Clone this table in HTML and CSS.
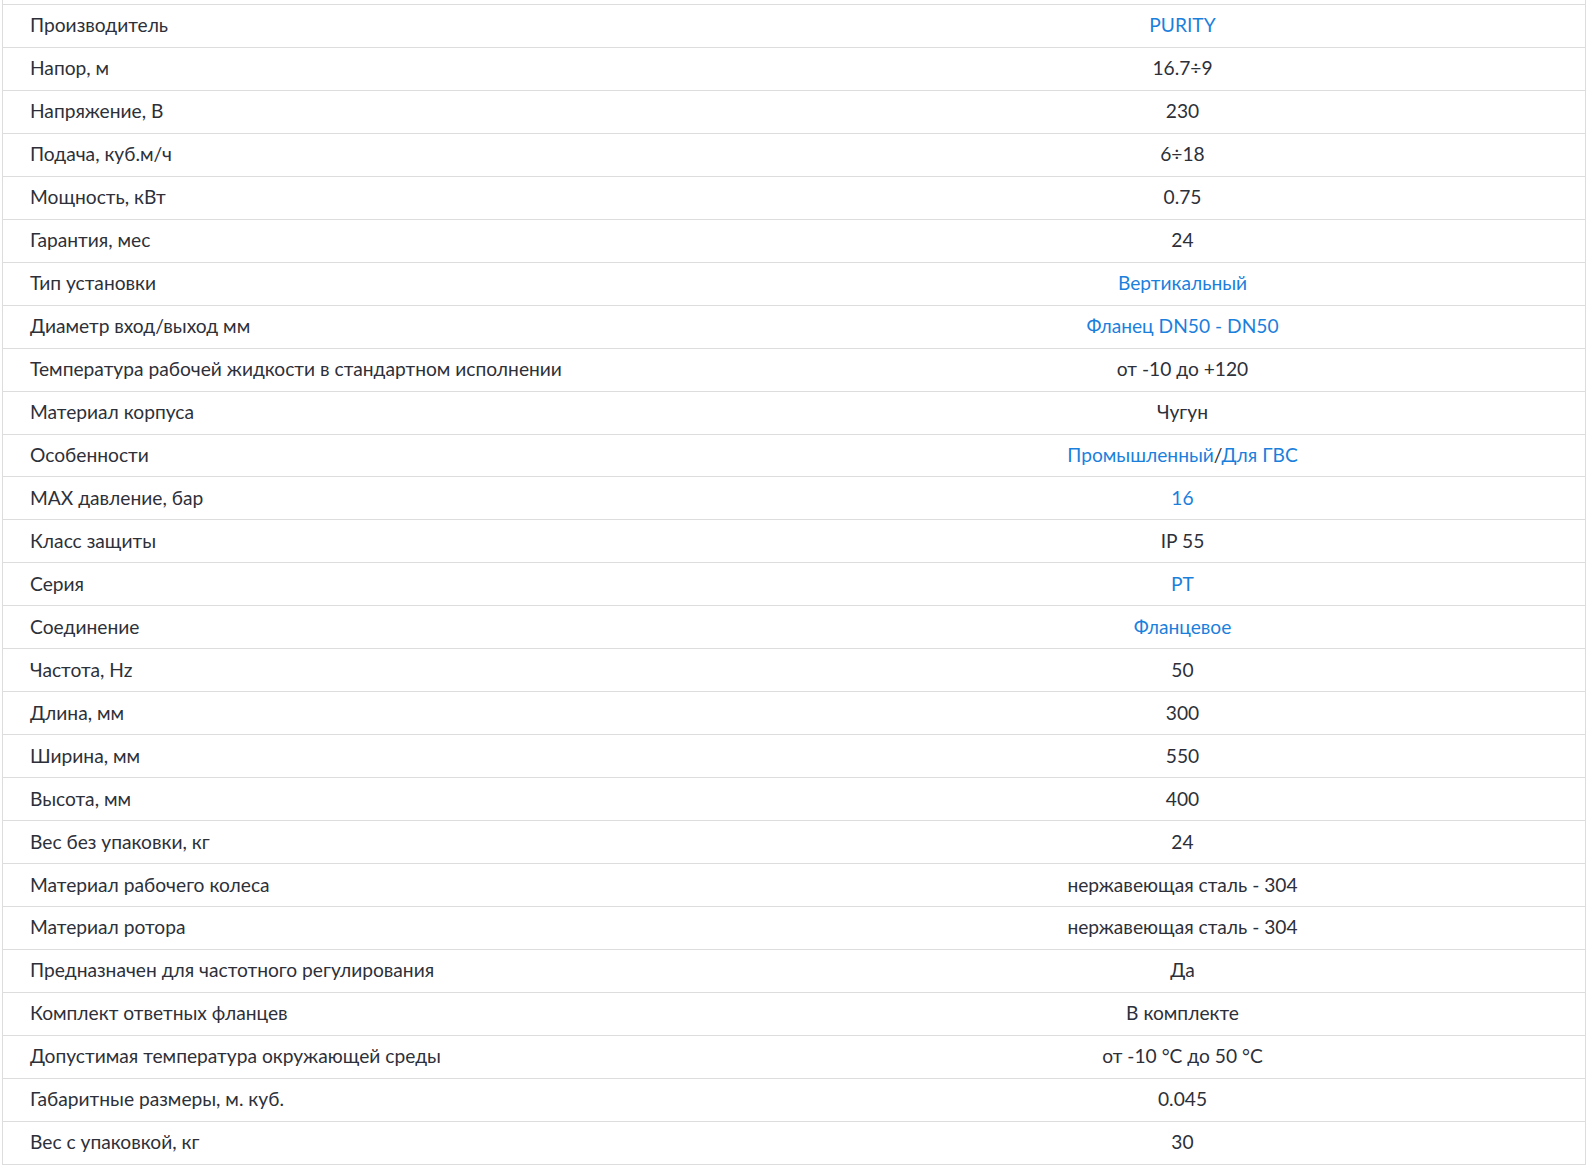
FILE: index.html
```html
<!DOCTYPE html>
<html>
<head>
  <meta charset="utf-8">
  <link rel="stylesheet" href="styles.css">
  <title>Характеристики</title>
</head>
<body>
  <div class="specs">
    <table class="specs-table">
      <tr><td>Производитель</td><td><a href="#">PURITY</a></td></tr>
      <tr><td>Напор, м</td><td>16.7÷9</td></tr>
      <tr><td>Напряжение, В</td><td>230</td></tr>
      <tr><td>Подача, куб.м/ч</td><td>6÷18</td></tr>
      <tr><td>Мощность, кВт</td><td>0.75</td></tr>
      <tr><td>Гарантия, мес</td><td>24</td></tr>
      <tr><td>Тип установки</td><td><a href="#">Вертикальный</a></td></tr>
      <tr><td>Диаметр вход/выход мм</td><td><a href="#">Фланец DN50 - DN50</a></td></tr>
      <tr><td>Температура рабочей жидкости в стандартном исполнении</td><td>от -10 до +120</td></tr>
      <tr><td>Материал корпуса</td><td>Чугун</td></tr>
      <tr><td>Особенности</td><td><a href="#">Промышленный</a>/<a href="#">Для ГВС</a></td></tr>
      <tr><td>MAX давление, бар</td><td><a href="#">16</a></td></tr>
      <tr><td>Класс защиты</td><td>IP 55</td></tr>
      <tr><td>Серия</td><td><a href="#">PT</a></td></tr>
      <tr><td>Соединение</td><td><a href="#">Фланцевое</a></td></tr>
      <tr><td>Частота, Hz</td><td>50</td></tr>
      <tr><td>Длина, мм</td><td>300</td></tr>
      <tr><td>Ширина, мм</td><td>550</td></tr>
      <tr><td>Высота, мм</td><td>400</td></tr>
      <tr><td>Вес без упаковки, кг</td><td>24</td></tr>
      <tr><td>Материал рабочего колеса</td><td>нержавеющая сталь - 304</td></tr>
      <tr><td>Материал ротора</td><td>нержавеющая сталь - 304</td></tr>
      <tr><td>Предназначен для частотного регулирования</td><td>Да</td></tr>
      <tr><td>Комплект ответных фланцев</td><td>В комплекте</td></tr>
      <tr><td>Допустимая температура окружающей среды</td><td>от -10 °C до 50 °C</td></tr>
      <tr><td>Габаритные размеры, м. куб.</td><td>0.045</td></tr>
      <tr><td>Вес с упаковкой, кг</td><td>30</td></tr>
    </table>
  </div>
</body>
</html>
```

FILE: styles.css
```css
body {
  margin: 0;
  background-color: white;
  color: #2d3039;
  font-family: Lato, "Open Sans", sans-serif;
  font-size: 19.2px;
}

.specs {
  margin-left: 2px;
  width: 1582px;
  padding-top: 4px;
  border-left: 1px solid #ddd;
  border-right: 1px solid #ddd;
}

.specs-table {
  width: 100%;
  border-collapse: collapse;
}

.specs-table tr {
  border-top: 1px solid #ddd;
  border-bottom: 1px solid #ddd;
}

.specs-table td {
  height: 42.96px;
  padding: 0 26px 2px;
  box-sizing: border-box;
  vertical-align: middle;
}

.specs-table td:first-child {
  width: 777px;
  padding-left: 27px;
}

.specs-table td:last-child {
  text-align: center;
}

.specs-table a {
  color: #1b7fdc;
  text-decoration: none;
}
```
